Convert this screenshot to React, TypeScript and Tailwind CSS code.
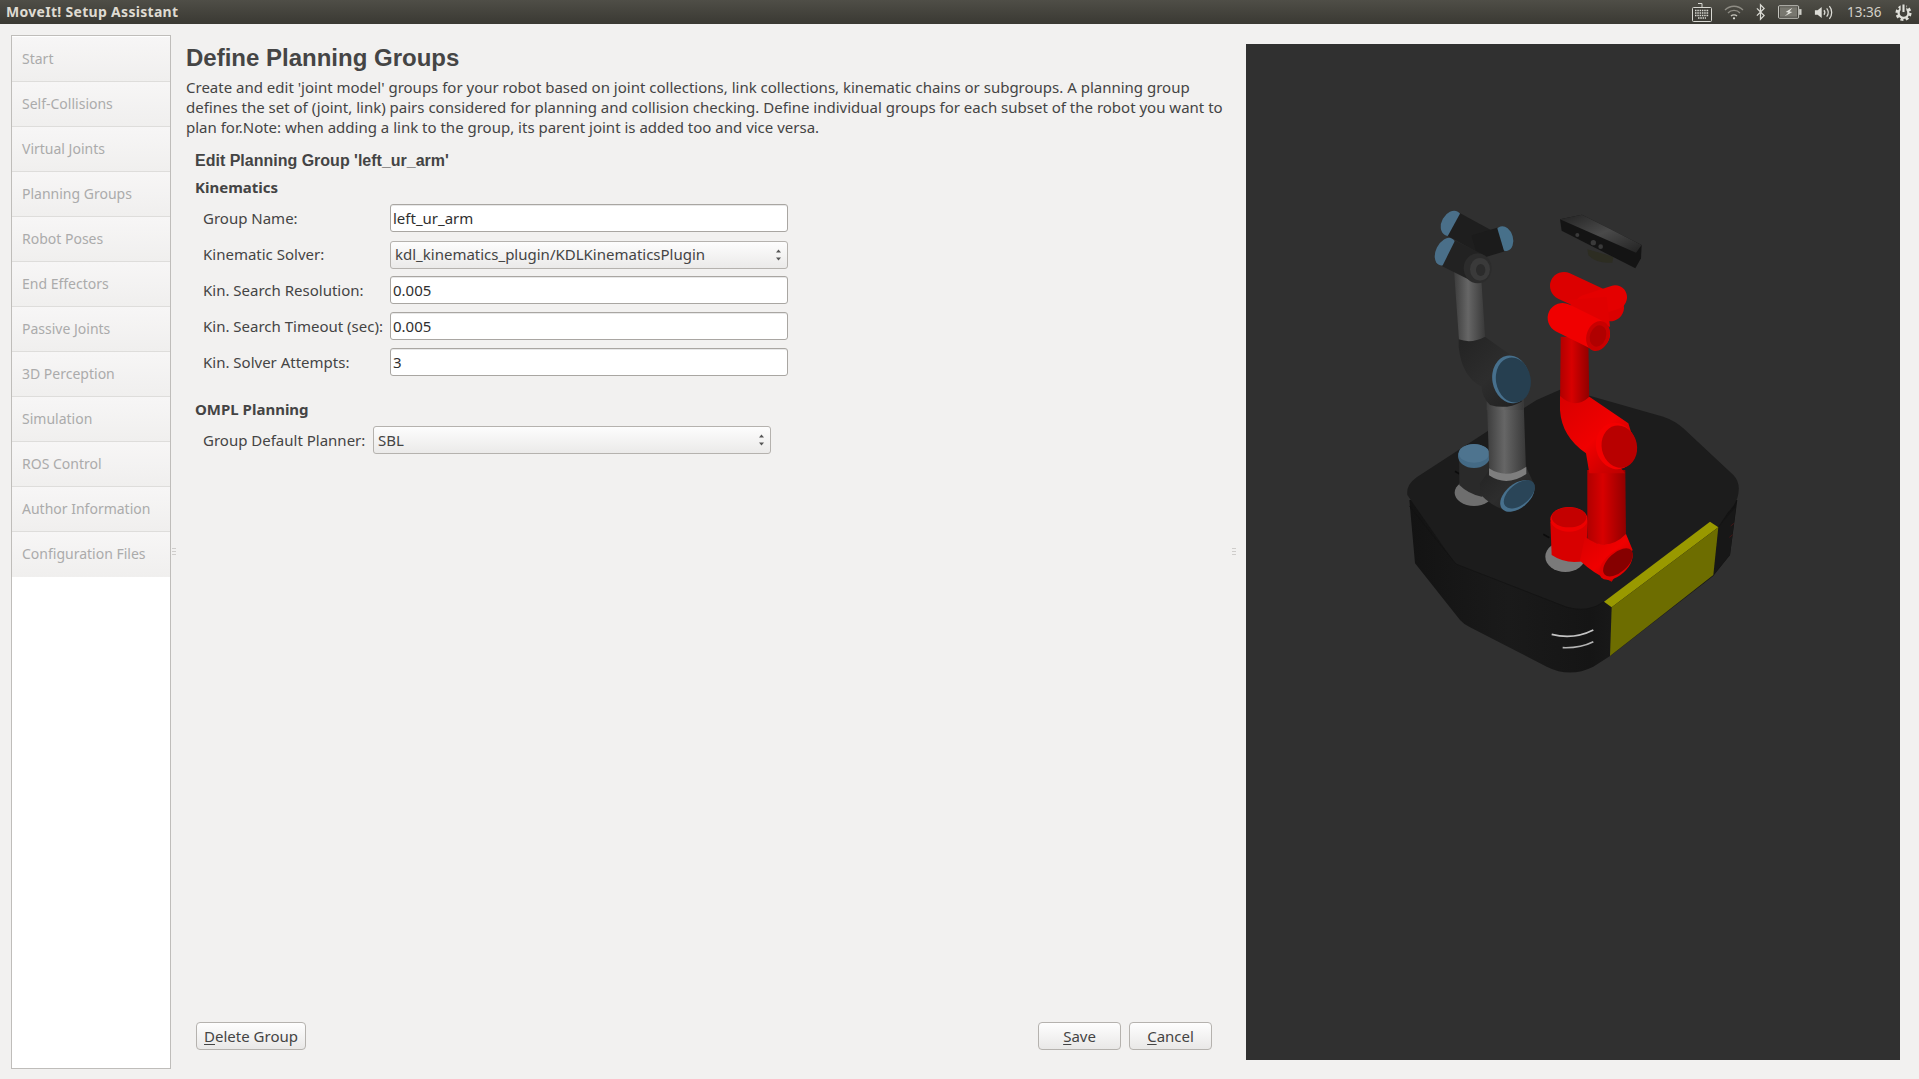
import React from "react";

const UI = "font-['Noto_Sans','Open_Sans',sans-serif]";
const HEAD = "font-['Liberation_Sans',Arial,sans-serif]";

const steps = ["Start","Self-Collisions","Virtual Joints","Planning Groups","Robot Poses","End Effectors","Passive Joints","3D Perception","Simulation","ROS Control","Author Information","Configuration Files"];

function TopIcons() {
  return (
    <div className="flex items-center h-full text-[#d9d5cc]">
      <svg width="20" height="20" viewBox="0 0 20 20" className="mr-[12px]" fill="none" stroke="#d8d8d2" strokeWidth="1">
        <path d="M10 5V1.500H6" />
        <rect x="0.500" y="5.500" width="19" height="14" rx="1" fill="#3d3c36" />
        <path d="M3 8.500h14M3 11h14M3 13.500h14M6 16h8" strokeDasharray="1.500 .8" strokeWidth="1.500" />
      </svg>
      <svg width="20" height="16" viewBox="0 0 20 16" className="mr-[12px]" fill="none" stroke="#8f8d85" strokeWidth="1.300">
        <path d="M1 6c5-5 13-5 18 0" />
        <path d="M4 9c3-3.500 9-3.500 12 0" />
        <path d="M7 12c1.500-1.600 4.500-1.600 6 0" stroke="#c7c5bd" />
        <circle cx="10" cy="14.300" r="1.100" fill="#e0e0da" stroke="none" />
      </svg>
      <svg width="9" height="18" viewBox="0 0 10 18" className="mr-[13px]" fill="none" stroke="#dcdcd6" strokeWidth="1.400">
        <path d="M1 5l8 8-4 4V1l4 4-8 8" />
      </svg>
      <svg width="24" height="14" viewBox="0 0 25 14" className="mr-[12px]" fill="none">
        <rect x="0.500" y="0.500" width="21" height="13" rx="1" stroke="#cfcfc9" />
        <rect x="2" y="2" width="18" height="10" fill="#78776f" />
        <rect x="22" y="4" width="2.500" height="6" fill="#cfcfc9" />
        <path d="M15 2.500 8 7l3 .5L7 11.500l8-4.500-3-.5z" fill="#e6e6e0" />
      </svg>
      <svg width="19" height="17" viewBox="0 0 21 18" className="mr-[14px]" fill="none" stroke="#dcdcd6" strokeWidth="1.400">
        <path d="M1 6.500h3L8.500 3v12L4 11.500H1z" fill="#dcdcd6" stroke="none" />
        <path d="M11 6.500c1.200 1.500 1.200 3.500 0 5" />
        <path d="M14 4.500c2.200 2.700 2.200 6.300 0 9" />
        <path d="M17 2c3.400 4 3.400 10 0 14" />
      </svg>
      <span className={`${UI} text-[13.500px] leading-none w-[35px] mr-[13px] mt-[1px] text-[#d3d0c8]`}>13:36</span>
      <svg width="17" height="17" viewBox="0 0 18 18" className="mr-[7px]" fill="none">
        <circle cx="9" cy="9.500" r="7" stroke="#e0e0da" strokeWidth="3" strokeDasharray="3.100 2.400" />
        <circle cx="9" cy="9.500" r="5.200" stroke="#e0e0da" strokeWidth="2.400" />
        <rect x="6" y="0" width="6" height="7" fill="#45443e" />
        <rect x="7.900" y="0.500" width="2.200" height="8" fill="#e0e0da" />
      </svg>
    </div>
  );
}

function Field({ label, value, first }: { label: string; value: string; first?: boolean }) {
  return (
    <div className={`flex items-center h-[28px] ${first ? "" : "mt-[8px]"}`}>
      <span className="w-[195px] pl-[8px]">{label}</span>
      <div className="w-[398px] h-[28px] bg-white border border-[#a9a6a2] rounded-[3px] flex items-center pl-[2px] text-[#2f2f2f] shadow-[inset_0_1px_0_#e8e8e8]">{value}</div>
    </div>
  );
}

function Combo({ value, className }: { value: string; className: string }) {
  return (
    <div className={`h-[28px] border border-[#b5b2ae] rounded-[3px] bg-gradient-to-b from-[#fdfdfd] to-[#ebeae9] flex items-center justify-between pl-[4px] pr-[5px] ${className}`}>
      <span>{value}</span>
      <svg width="7" height="14" viewBox="0 0 7 14" fill="#555">
        <path d="M3.500 1.500 6 4.500H1zM3.500 12.500 1 9.500h5z" />
      </svg>
    </div>
  );
}

function Btn({ label, rest, w }: { label: string; rest: string; w: string }) {
  return (
    <div className={`h-[28px] ${w} border border-[#b5b2ae] rounded-[4px] bg-gradient-to-b from-[#fefefe] to-[#e9e8e7] flex items-center justify-center`}>
      <span><span className="underline underline-offset-2">{label}</span>{rest}</span>
    </div>
  );
}

function Handle() {
  return (
    <div className="w-[4px] flex flex-col gap-[2px]">
      {[0,1,2].map(i => <div key={i} className="w-[4px] h-[1px] bg-[#cfcdcb]" />)}
    </div>
  );
}

function Robot() {
  return (
    <svg viewBox="1246 44 654 1016" className="w-full h-full block">
      <defs>
        <linearGradient id="tube" x1="0" y1="0" x2="1" y2="0">
          <stop offset="0" stopColor="#3c3c3c" />
          <stop offset=".45" stopColor="#666" />
          <stop offset="1" stopColor="#383838" />
        </linearGradient>
        <linearGradient id="redTube" x1="0" y1="0" x2="1" y2="0">
          <stop offset="0" stopColor="#b00000" />
          <stop offset=".4" stopColor="#d80000" />
          <stop offset="1" stopColor="#900000" />
        </linearGradient>
        <linearGradient id="red2" x1="0" y1="0" x2="1" y2="1">
          <stop offset="0" stopColor="#d80000" />
          <stop offset=".5" stopColor="#f00000" />
          <stop offset="1" stopColor="#b00000" />
        </linearGradient>
        <linearGradient id="side" x1="0" y1="0" x2="1" y2="0">
          <stop offset="0" stopColor="#131313" />
          <stop offset=".3" stopColor="#1a1a1a" />
          <stop offset=".55" stopColor="#151515" />
          <stop offset=".72" stopColor="#1d1d1d" />
          <stop offset="1" stopColor="#121212" />
        </linearGradient>
        <linearGradient id="kin" x1="0" y1="0" x2="1" y2="1">
          <stop offset="0" stopColor="#222" />
          <stop offset=".5" stopColor="#4a4a4a" />
          <stop offset="1" stopColor="#222" />
        </linearGradient>
        <linearGradient id="blk" x1="0" y1="0" x2="1" y2="1">
          <stop offset="0" stopColor="#232323" />
          <stop offset=".5" stopColor="#2d2d2d" />
          <stop offset="1" stopColor="#1e1e1e" />
        </linearGradient>
      </defs>

      {/* base, coordinates of the lower crop */}
      <g transform="translate(1380 400) scale(.33333)">
        <path d="M88 300 L105 490 L240 660 Q250 672 270 682 L500 800 Q570 835 640 800 L695 765 L1000 528 L1050 465 L1072 300 Z" fill="url(#side)" />
        <path d="M82 285 Q78 255 110 232 L320 95 L470 0 L550 -35 L850 50 Q885 62 910 85 L1060 225 Q1085 250 1072 295 Q1062 320 1045 335 L1015 380 L695 622 L672 605 Q620 640 560 620 L235 495 L225 490 Z" fill="#1c1c1c" />
        <path d="M88 318 L228 492 L560 622 Q625 640 672 605" fill="none" stroke="#121212" strokeWidth="2" />
        <path d="M1015 382 L1068 320 L1050 465 L1000 525 Z" fill="#171717" />
        <path d="M1052 378 l10 -8 M1048 412 l10 -8" stroke="#5a1515" strokeWidth="2" />
        <path d="M990 365 L1015 382 L695 622 L672 605 Z" fill="#999900" />
        <path d="M1015 382 L1000 525 L690 768 L695 622 Z" fill="#6d6d00" />
        <path d="M515 703 Q580 720 640 690" fill="none" stroke="#c4c4c4" strokeWidth="5" />
        <path d="M548 743 Q600 745 640 725" fill="none" stroke="#b4b4b4" strokeWidth="5" />

        {/* grey arm foot */}
        <ellipse cx="282" cy="278" rx="58" ry="40" fill="#6e6e6e" />
        <path d="M225 214 l14 8" stroke="#0c0c0c" strokeWidth="5" />
        <path d="M237 170 L238 255 Q265 282 305 290 L332 270 L330 175 Z" fill="#2a2a2a" />
        <ellipse cx="282" cy="168" rx="48" ry="36" fill="#446a85" />
        <ellipse cx="282" cy="160" rx="46" ry="28" fill="#4e748f" />
        <path d="M300 250 L328 210 L440 205 L462 252 L395 336 Q340 325 300 282 Z" fill="url(#blk)" />
        <ellipse cx="412" cy="288" rx="60" ry="36" transform="rotate(-40 412 288)" fill="#47708d" />
        <ellipse cx="418" cy="283" rx="55" ry="31" transform="rotate(-40 418 283)" fill="#2a4558" />
        <path d="M320 -20 H430 L438 210 Q380 240 328 210 Z" fill="url(#tube)" />
        <path d="M327 205 Q380 240 439 200 L439 222 Q380 262 327 226 Z" fill="#7e7e7e" />

        {/* red arm foot */}
        <ellipse cx="556" cy="470" rx="60" ry="46" fill="#7a7a7a" />
        <path d="M490 403 l18 10" stroke="#0c0c0c" strokeWidth="5" />
        <path d="M511 365 L515 465 Q560 495 615 482 L625 360 Z" fill="#d80000" />
        <ellipse cx="567" cy="358" rx="56" ry="37" fill="#ee0000" />
        <ellipse cx="567" cy="352" rx="52" ry="30" fill="#c40000" />
        <path d="M622 210 H736 L738 420 Q680 450 622 420 Z" fill="url(#redTube)" />
        <path d="M615 410 Q680 460 738 402 L758 450 L695 545 Q640 520 600 482 Z" fill="url(#red2)" />
        <ellipse cx="708" cy="492" rx="60" ry="34" transform="rotate(-42 708 492)" fill="#e00000" />
        <ellipse cx="714" cy="487" rx="54" ry="29" transform="rotate(-42 714 487)" fill="#860000" />
      </g>

      {/* upper part, coordinates of the upper crop */}
      <g transform="translate(1380 190) scale(.33333)">
        {/* grey arm */}
        <path d="M222 240 H302 L316 450 Q275 470 237 450 Z" fill="url(#tube)" />
        <path d="M320 630 H428 L430 660 H320 Z" fill="url(#tube)" />
        <path d="M236 448 Q275 462 315 440 Q350 465 395 497 L450 560 L425 635 Q380 660 330 645 Q305 620 305 590 Q245 560 236 470 Z" fill="url(#blk)" />
        <ellipse cx="393" cy="568" rx="56" ry="72" transform="rotate(-10 393 568)" fill="#47708d" />
        <ellipse cx="400" cy="570" rx="52" ry="68" transform="rotate(-10 400 570)" fill="#263f50" />
        <ellipse cx="214" cy="100" rx="29" ry="40" transform="rotate(29 214 100)" fill="#4a6f89" />
        <ellipse cx="372" cy="146" rx="27" ry="38" transform="rotate(-16 372 146)" fill="#47708a" />
        <ellipse cx="196" cy="185" rx="28" ry="44" transform="rotate(26 196 185)" fill="#4a6f89" />
        <path d="M222 104 L325 160" stroke="#1e1e1e" strokeWidth="78" />
        <path d="M362 149 L285 172" stroke="#1b1b1b" strokeWidth="74" />
        <path d="M206 190 L290 232" stroke="#222222" strokeWidth="86" />
        <ellipse cx="293" cy="235" rx="42" ry="45" fill="#2c2c2c" />
        <ellipse cx="300" cy="238" rx="30" ry="34" fill="#3a3a3a" />
        <ellipse cx="302" cy="240" rx="14" ry="18" fill="#2b2b2b" />

        {/* kinect */}
        <path d="M622 178 L700 200 L697 218 Q650 222 625 196 Z" fill="#2d2d22" />
        <path d="M540 88 L606 74 L785 165 L783 205 L766 235 L545 122 Z" fill="#141414" />
        <path d="M540 88 L606 74 L785 165 L768 188 Z" fill="url(#kin)" />
        <circle cx="592" cy="135" r="6" fill="#3a3a3a" />
        <circle cx="640" cy="158" r="8" fill="#3a3a3a" />
        <circle cx="662" cy="170" r="7" fill="#3a3a3a" />

        {/* red arm */}
        <path d="M542 440 H625 L628 640 Q585 670 540 640 Z" fill="url(#redTube)" />
        <path d="M540 618 Q585 660 628 620 L745 700 L770 780 L720 830 L735 850 L628 850 L618 790 Q545 740 540 660 Z" fill="url(#red2)" />
        <ellipse cx="708" cy="768" rx="60" ry="70" transform="rotate(-12 708 768)" fill="#f40000" />
        <ellipse cx="718" cy="770" rx="53" ry="64" transform="rotate(-12 718 770)" fill="#b80000" />
        <path d="M552 288 L690 352" stroke="#dc0000" strokeWidth="84" strokeLinecap="round" />
        <path d="M705 322 L620 350" stroke="#e40000" strokeWidth="72" strokeLinecap="round" />
        <path d="M565 330 L680 320 L690 410 L600 400 Z" fill="#e00000" />
        <path d="M548 384 L645 432" stroke="#f00000" strokeWidth="90" strokeLinecap="round" />
        <ellipse cx="654" cy="438" rx="34" ry="46" transform="rotate(20 654 438)" fill="#c80000" />
        <ellipse cx="654" cy="438" rx="24" ry="33" transform="rotate(20 654 438)" fill="#b00000" />
      </g>
    </svg>
  );
}

export default function App() {
  return (
    <div className={`w-[1919px] h-[1079px] bg-[#f2f1f0] flex flex-col overflow-hidden text-[15px] text-[#444444] ${UI}`}>
      <header className="h-[24px] shrink-0 bg-gradient-to-b from-[#4f4e47] to-[#3a3933] flex items-center justify-between pl-[6px]">
        <span className="font-bold text-[14px] text-[#dfdbd2] tracking-[.3px] -mt-[1px]">MoveIt! Setup Assistant</span>
        <TopIcons />
      </header>
      <div className="flex-1 flex">
        <nav className="ml-[11px] mt-[11px] mb-[10px] w-[160px] pt-[1px] border border-[#bfbdba] bg-white flex flex-col text-[14px]">
          {steps.map(s => (
            <div key={s} className="h-[45px] shrink-0 flex items-center pl-[10px] pb-[2px] text-[#ababab] bg-gradient-to-b from-[#f7f6f6] to-[#f0efee] border-b border-[#dedddb] last:border-b-0">{s}</div>
          ))}
        </nav>
        <div className="w-[15px] pl-[1px] flex items-center"><Handle /></div>
        <main className="w-[1038px] flex flex-col pb-[29px]">
          <h1 className={`${HEAD} font-bold text-[24px] leading-[28px] text-[#454545] mt-[20px]`}>Define Planning Groups</h1>
          <p className="mt-[5px] leading-[20px] whitespace-nowrap">
            Create and edit 'joint model' groups for your robot based on joint collections, link collections, kinematic chains or subgroups. A planning group<br />
            defines the set of (joint, link) pairs considered for planning and collision checking. Define individual groups for each subset of the robot you want to<br />
            plan for.Note: when adding a link to the group, its parent joint is added too and vice versa.
          </p>
          <div className="ml-[9px] flex-1 flex flex-col">
            <h2 className={`${HEAD} font-bold text-[16px] leading-[18px] mt-[15px]`}>Edit Planning Group 'left_ur_arm'</h2>
            <h3 className="font-bold text-[15px] leading-[20px] mt-[7px]">Kinematics</h3>
            <div className="mt-[7px]">
              <Field first label="Group Name:" value="left_ur_arm" />
              <div className="flex items-center h-[27px] mt-[9px]">
                <span className="w-[195px] pl-[8px]">Kinematic Solver:</span>
                <Combo className="w-[398px]" value="kdl_kinematics_plugin/KDLKinematicsPlugin" />
              </div>
              <Field label="Kin. Search Resolution:" value="0.005" />
              <Field label="Kin. Search Timeout (sec):" value="0.005" />
              <Field label="Kin. Solver Attempts:" value="3" />
            </div>
            <h3 className="font-bold text-[15px] leading-[20px] mt-[23px]">OMPL Planning</h3>
            <div className="flex items-center mt-[7px]">
              <span className="w-[178px] pl-[8px]">Group Default Planner:</span>
              <Combo className="w-[398px]" value="SBL" />
            </div>
            <div className="mt-auto flex items-center pr-[12px]">
              <Btn w="w-[110px] ml-[1px]" label="D" rest="elete Group" />
              <div className="flex-1" />
              <Btn w="w-[83px]" label="S" rest="ave" />
              <div className="w-[8px]" />
              <Btn w="w-[83px]" label="C" rest="ancel" />
            </div>
          </div>
        </main>
        <div className="w-[22px] pl-[8px] flex items-center"><Handle /></div>
        <section className="mt-[20px] mb-[19px] w-[654px] bg-[#303030]"><Robot /></section>
      </div>
    </div>
  );
}
